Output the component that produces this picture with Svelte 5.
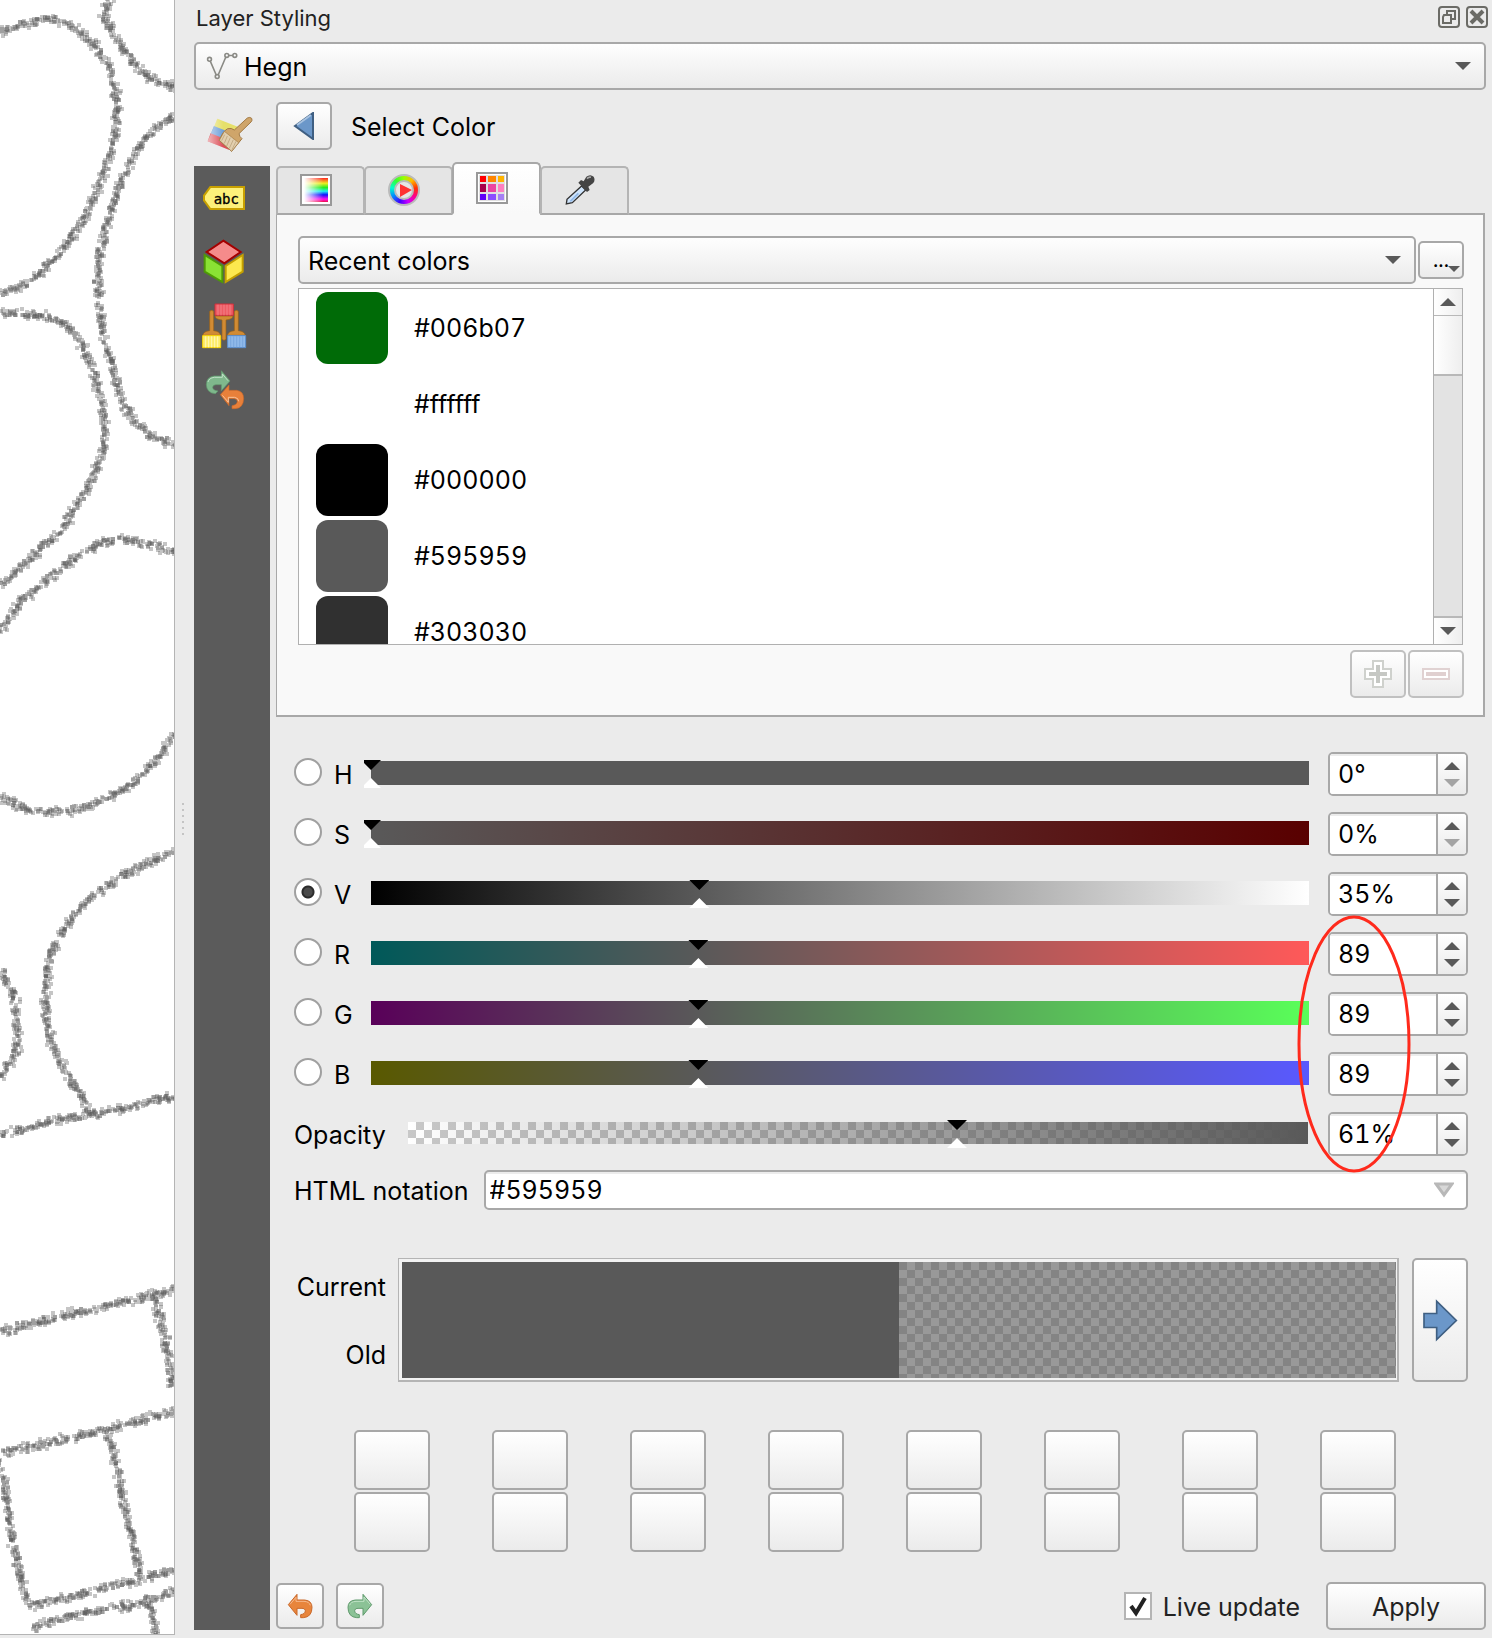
<script>
  const channels = [
    { id: 'H', max: 359, value: 0, text: '0°', track: 'hue', atMin: true },
    { id: 'S', max: 100, value: 0, text: '0%', track: 'saturation', atMin: true },
    { id: 'V', max: 100, value: 35, text: '35%', track: 'value' },
    { id: 'R', max: 255, value: 89, text: '89', track: 'red' },
    { id: 'G', max: 255, value: 89, text: '89', track: 'green' },
    { id: 'B', max: 255, value: 89, text: '89', track: 'blue' }
  ];
  let mode = $state('V');
  let live = $state(true);
  const recent = ['#006b07', '#ffffff', '#000000', '#595959', '#303030'];
  const slots = Array.from({ length: 16 }, (_, i) => i + 1);

  // Hedge lines of the map, drawn as a scatter of small translucent squares.
  const hedges = [
    [[0,32],[20,25],[47,18],[67,24],[88,38],[100,52],[112,75],[117,102],[115,130],[110,155],[98,190],[80,225],[60,252],[40,274],[20,287],[0,293]],
    [[112,-4],[103,18],[113,35],[125,50],[138,70],[150,78],[162,84],[176,87]],
    [[176,115],[160,125],[145,140],[130,162],[118,190],[107,225],[100,255],[98,288],[102,325],[112,365],[120,397],[135,422],[153,437],[176,445]],
    [[0,314],[15,313],[35,315],[53,319],[68,325],[82,345],[93,370],[100,392],[105,425],[103,452],[93,479],[78,503],[62,530],[40,550],[17,570],[0,586]],
    [[0,632],[20,603],[40,585],[73,559],[103,542],[120,540],[147,543],[176,552]],
    [[0,797],[20,807],[43,812],[73,810],[97,803],[123,791],[140,777],[160,756],[175,734]],
    [[176,852],[153,861],[130,871],[103,889],[80,908],[62,933],[48,959],[46,988],[46,1017],[51,1042],[63,1066],[80,1093],[92,1116]],
    [[0,1135],[50,1122],[90,1115],[133,1106],[176,1096]],
    [[0,970],[12,991],[18,1022],[17,1051],[0,1078]],
    [[0,1331],[20,1327],[67,1315],[100,1308],[123,1302],[153,1295],[176,1289]],
    [[153,1293],[160,1317],[167,1347],[173,1387]],
    [[0,1453],[47,1443],[105,1430],[150,1418],[176,1411]],
    [[106,1431],[117,1467],[123,1500],[132,1537],[140,1577]],
    [[0,1460],[7,1500],[13,1543],[28,1605]],
    [[28,1606],[70,1597],[117,1585],[176,1570]],
    [[33,1630],[40,1624],[77,1615],[133,1605],[176,1592]],
    [[149,1602],[157,1636]]
  ];
  let seed = 7;
  function rand() {
    seed = (seed * 1664525 + 1013904223) % 4294967296;
    return seed / 4294967296;
  }
  const layers = ['', '', '', '', '', ''];
  let n = 0;
  for (const line of hedges) {
    for (let i = 0; i < line.length - 1; i++) {
      const [x0, y0] = line[i];
      const [x1, y1] = line[i + 1];
      const len = Math.hypot(x1 - x0, y1 - y0);
      const count = Math.round(len * 1.3);
      for (let k = 0; k < count; k++) {
        const t = rand();
        const off = (rand() + rand() + rand() - 1.5) * 4.4;
        const x = Math.round(x0 + (x1 - x0) * t - ((y1 - y0) / len) * off) - 2;
        const y = Math.round(y0 + (y1 - y0) * t + ((x1 - x0) / len) * off) - 2;
        layers[n++ % layers.length] += `M${x} ${y}h4v4h-4z`;
      }
    }
  }
</script>

{#snippet spin(label, text, low)}
  <div class="spin">
    <input type="text" aria-label={label} value={text} />
    <div class="steps">
      <button aria-label="Increase {label}"><svg viewBox="0 0 16 8"><path d="M0 8 8 0l8 8z" /></svg></button>
      <button aria-label="Decrease {label}" disabled={low}><svg viewBox="0 0 16 8"><path d="M0 0h16L8 8z" /></svg></button>
    </div>
  </div>
{/snippet}

{#snippet undoArrow()}
  <path d="M865 1208 891 1177V1194H914Q936 1196 936 1216 936 1245 910 1247H902V1238Q916 1236 916 1226 915 1218 906 1219H891V1240Z" fill="#e8853c" stroke="#c9682a" stroke-width="3" />
  <path d="M870 1207 888 1186V1198H912Q928 1199 931 1210" fill="none" stroke="#f6b98c" stroke-width="3" />
{/snippet}
{#snippet redoArrow()}
  <path d="M1115 1208 1089 1177V1194H1066Q1044 1196 1044 1216 1044 1245 1070 1247H1078V1238Q1064 1236 1064 1226 1065 1218 1074 1219H1089V1240Z" fill="#8bc296" stroke="#5f9a6c" stroke-width="3" />
  <path d="M1110 1206 1092 1185V1198H1068Q1052 1199 1049 1210" fill="none" stroke="#c0e2c6" stroke-width="3" />
{/snippet}

<div class="window">
  <div class="map">
    <svg viewBox="0 0 174 1634" preserveAspectRatio="xMinYMin slice" aria-label="Map">
      {#each layers as d}<path {d} />{/each}
    </svg>
  </div>
  <div class="splitter"><i></i></div>

  <section class="dock">
    <header class="title">
      <h1>Layer Styling</h1>
      <button aria-label="Float panel">
        <svg viewBox="0 0 22 22" fill="none" stroke="#6b6b66" stroke-width="2"><rect x="1" y="1" width="20" height="20" rx="3" /><path d="M5 11V17H13V9H6ZM9 8V5H17V13H14" /></svg>
      </button>
      <button aria-label="Close panel">
        <svg viewBox="0 0 22 22" fill="none" stroke="#6b6b66" stroke-width="2"><rect x="1" y="1" width="20" height="20" rx="3" /><path d="M5 5 17 17M17 5 5 17" stroke-width="4" /></svg>
      </button>
    </header>

    <div class="combo layer">
      <select aria-label="Layer"><option>Hegn</option></select>
      <svg class="layer-icon" viewBox="76 150 100 96" fill="none" stroke="#8a8a85" stroke-width="5"><path d="M89 182 108 226M114 226 138 170M146 165H160" /><circle cx="87" cy="177" r="6" /><circle cx="111" cy="231" r="6" /><circle cx="141" cy="165" r="6" /><circle cx="166" cy="165" r="6" /></svg>
      <svg class="caret" viewBox="0 0 16 8"><path d="M0 0h16L8 8z" /></svg>
    </div>

    <div class="body">
      <nav class="side">
        <button class="current" aria-label="Symbology">
          <svg viewBox="48 60 144 144">
            <defs><linearGradient id="fade"><stop offset="0" stop-color="#fff" stop-opacity=".6" /><stop offset=".5" stop-color="#fff" stop-opacity="0" /></linearGradient></defs>
            <path d="M82 86 147 112 136 134 72 110Z" fill="#e6e06a" />
            <path d="M72 108 138 134 126 158 62 132Z" fill="#6f9fd8" />
            <path d="M62 130 128 156 118 180 53 154Z" fill="#dc4f58" />
            <path d="M82 86 147 112 118 180 53 154Z" fill="url(#fade)" />
            <path d="M133 120 172 84Q180 80 185 85 188 91 183 96L147 131Q148 140 156 146L125 184 88 151Q98 124 113 116 124 113 133 120Z" fill="#cfa56a" stroke="#a27a45" stroke-width="3" />
            <path d="M103 124 88 151 125 184 146 158Z" fill="#e2cfae" stroke="#a27a45" stroke-width="2" />
            <path d="M104 134 95 152M112 138 103 160M121 143 110 168M130 149 118 175M138 154 126 179" stroke="#b49a72" stroke-width="2" />
          </svg>
        </button>
        <div class="dark">
          <button aria-label="Labels">
            <svg viewBox="30 252 144 144"><path d="M61 291H162V357H61L42 331V317Z" fill="#fdf07a" stroke="#c8a000" stroke-width="6" /><text x="109" y="342" text-anchor="middle">abc</text></svg>
          </button>
          <button aria-label="3D view">
            <svg viewBox="30 444 144 144" stroke-width="6"><path d="M44 495 97 528V576L44 545Z" fill="#8ae234" stroke="#4e9a06" /><path d="M158 495 107 528V576L158 545Z" fill="#fce94f" stroke="#c4a000" /><path d="M100 452 152 486 103 520 50 486Z" fill="#f58b8b" stroke="#a40000" /></svg>
          </button>
          <button aria-label="Masks">
            <svg viewBox="30 636 144 144">
              <g stroke="#9a6015" stroke-width="2">
                <path d="M59 664Q65 658 71 664V722Q90 724 92 736H38Q40 724 59 722Z" fill="#d18b34" />
                <path d="M133 664Q139 658 145 664V722Q164 724 166 736H112Q114 724 133 722Z" fill="#d18b34" />
                <path d="M75 678H129Q128 688 108 690V748Q102 754 96 748V690Q76 688 75 678Z" fill="#d18b34" />
              </g>
              <path d="M75 642H130V676H75Z" fill="#ee5c64" stroke="#cf2f3a" stroke-width="3" />
              <path d="M38 737H92V773H38Z" fill="#fdec6a" stroke="#fdd800" stroke-width="3" />
              <path d="M113 737H167V773H113Z" fill="#8fb9ea" stroke="#5a8fd0" stroke-width="3" />
              <path d="M84 644V676M93 644V676M102 644V676M111 644V676M120 644V676" stroke="#f7949a" stroke-width="2" />
              <path d="M47 739V772M56 739V772M65 739V772M74 739V772M83 739V772" stroke="#fff8b8" stroke-width="3" />
              <path d="M122 739V772M131 739V772M140 739V772M149 739V772M158 739V772" stroke="#6f9fd8" stroke-width="2" />
            </svg>
          </button>
          <button aria-label="History">
            <svg viewBox="30 828 144 144">
              <path d="M120 873 94 842V858H72Q49 861 49 884 50 909 76 911L84 903Q69 902 68 892 69 884 78 884H94V902Z" fill="#7fb88c" stroke="#5f9a6c" stroke-width="2" />
              <path d="M114 872 97 852V862H73Q57 864 54 876" fill="none" stroke="#bfe0c6" stroke-width="3" />
              <path d="M91 914 117 885V901H140Q161 904 161 926 160 954 136 956H126V947Q141 945 142 934 141 926 132 926H117V947Z" fill="#e8803a" stroke="#c9682a" stroke-width="2" />
              <path d="M97 916 115 937V922H134Q146 924 146 934" fill="none" stroke="#f9c39b" stroke-width="3" />
            </svg>
          </button>
        </div>
      </nav>

      <main>
        <div class="head">
          <button class="push back" aria-label="Go back"><svg viewBox="0 0 28 28"><path d="M5 14 23 1V27Z" fill="#6b97c9" stroke="#3f5f82" stroke-width="2" /><path d="M7 13 21 3" stroke="#a9c4e2" stroke-width="2" /></svg></button>
          <h2>Select Color</h2>
        </div>

        <div class="tabs" role="tablist">
          <button role="tab" aria-selected="false" aria-label="Color ramp">
            <svg viewBox="0 0 32 32">
              <defs>
                <linearGradient id="ramp" x2="0" y2="1"><stop offset="0" stop-color="#f22" /><stop offset=".22" stop-color="#ee2" /><stop offset=".4" stop-color="#2e2" /><stop offset=".55" stop-color="#2ee" /><stop offset=".7" stop-color="#11f" /><stop offset=".88" stop-color="#f1e" /><stop offset="1" stop-color="#e14" /></linearGradient>
                <linearGradient id="wash"><stop offset="0" stop-color="#fff" /><stop offset=".8" stop-color="#fff" stop-opacity="0" /></linearGradient>
              </defs>
              <rect x="1" y="1" width="30" height="30" fill="#fff" stroke="#999" stroke-width="2" /><rect x="4" y="4" width="24" height="24" fill="url(#ramp)" /><rect x="4" y="4" width="24" height="24" fill="url(#wash)" />
            </svg>
          </button>
          <button role="tab" aria-selected="false" aria-label="Color wheel">
            <span class="wheel"><svg viewBox="0 0 20 20"><circle cx="10" cy="10" r="9" fill="#e6e6e6" stroke="#bbb" stroke-width="2" /><path d="M6 4 18 10 6 17Z" fill="#f33" /></svg></span>
          </button>
          <button role="tab" aria-selected="true" aria-label="Color swatches">
            <svg viewBox="0 0 32 32"><rect x="1" y="1" width="30" height="30" fill="#fff" stroke="#999" stroke-width="2" /><rect x="3" y="3" width="26" height="26" fill="#e0e0e0" />
              <path d="M4 4h6v6H4z" fill="#f00" /><path d="M12 4h8v6h-8z" fill="#ff8500" /><path d="M22 4h6v6h-6z" fill="#ffb400" />
              <path d="M4 12h6v8H4z" fill="#a8004a" /><path d="M12 12h8v8h-8z" fill="#ec44a0" /><path d="M22 12h6v8h-6z" fill="#ff7fc0" />
              <path d="M4 22h6v6H4z" fill="#6000f8" /><path d="M12 22h8v6h-8z" fill="#8c4dff" /><path d="M22 22h6v6h-6z" fill="#a680f5" /></svg>
          </button>
          <button role="tab" aria-selected="false" aria-label="Color picker">
            <svg viewBox="1153 522 96 96"><path d="M1206 558 1218 570 1178 608 1160 612 1162 598Z" fill="#cfe4fb" stroke="#333" stroke-width="4" /><path d="M1196 580 1172 604" stroke="#8fb8e8" stroke-width="5" /><path d="M1196 548 1204 540 1212 544 1220 530Q1232 521 1242 530 1248 541 1240 550L1226 560 1230 570 1222 576Z" fill="#444" /><path d="M1222 536Q1228 530 1234 532" stroke="#aaa" stroke-width="5" fill="none" /></svg>
          </button>
        </div>

        <div class="page">
          <div class="scheme">
            <div class="combo">
              <select aria-label="Color scheme"><option>Recent colors</option></select>
              <svg class="caret" viewBox="0 0 16 8"><path d="M0 0h16L8 8z" /></svg>
            </div>
            <button class="push more" aria-label="Scheme options"><span>...</span><svg viewBox="0 0 12 6"><path d="M0 0h12L6 6z" /></svg></button>
          </div>
          <div class="list">
            <ul>
              {#each recent as c}
                <li><i style:background={c}></i><span>{c}</span></li>
              {/each}
            </ul>
            <div class="scroll">
              <button aria-label="Scroll up"><svg viewBox="0 0 16 8"><path d="M0 8 8 0l8 8z" /></svg></button>
              <div class="groove"><i></i></div>
              <button aria-label="Scroll down"><svg viewBox="0 0 16 8"><path d="M0 0h16L8 8z" /></svg></button>
            </div>
          </div>
          <div class="edit">
            <button class="push" disabled aria-label="Add color"><svg viewBox="0 0 28 28"><path d="M9 1h10v8h8v10h-8v8H9v-8H1V9h8z" fill="#fff" stroke="#cfd1cd" stroke-width="2" /><path d="M14 5v18M5 14h18" stroke="#c6c8c4" stroke-width="4" /></svg></button>
            <button class="push" disabled aria-label="Remove color"><svg viewBox="0 0 28 28"><path d="M1 9h26v10H1z" fill="#fff" stroke="#e0d2d2" stroke-width="2" /><path d="M4 14h20" stroke="#e0d0d0" stroke-width="4" /></svg></button>
          </div>
        </div>

        <div class="editor">
          <div class="channels">
            {#each channels as ch}
              <div class="row">
                <label class="channel"><input type="radio" name="channel" value={ch.id} bind:group={mode} /><span>{ch.id}</span></label>
                <div class="slider {ch.track}">
                  <input type="range" min="0" max={ch.max} value={ch.value} aria-label="{ch.id} level" />
                </div>
                {@render spin(ch.id, ch.text, ch.atMin)}
              </div>
            {/each}
            <div class="row opacity">
              <label for="opacity">Opacity</label>
              <div class="slider alpha"><input id="opacity" type="range" min="0" max="100" value="61" /></div>
              {@render spin('Opacity', '61%', false)}
            </div>
            <svg class="mark" viewBox="0 0 114 258" aria-hidden="true"><ellipse cx="57" cy="129" rx="55" ry="127" /></svg>
          </div>

          <div class="html">
            <label for="html">HTML notation</label>
            <div class="field">
              <input id="html" type="text" value="#595959" />
              <button aria-label="Color formats"><svg viewBox="0 0 20 16"><path d="M2 2H18L10 13Z" fill="#d8d8d8" stroke="#b8b8b8" stroke-width="3" /></svg></button>
            </div>
          </div>

          <div class="preview">
            <div class="names"><span>Current</span><span>Old</span></div>
            <div class="frame"><div class="solid"></div><div class="blend"></div></div>
            <button class="push" aria-label="Add to swatches"><svg viewBox="516 206 108 128"><path d="M522 249H560V212L619 270 560 327V291H522Z" fill="#6b97c9" stroke="#3f5f82" stroke-width="5" /></svg></button>
          </div>

          <div class="slots">
            {#each slots as s}<button class="push" aria-label="Color slot {s}"></button>{/each}
          </div>
        </div>

        <footer>
          <button class="push tool" aria-label="Undo"><svg viewBox="858 1170 84 84">{@render undoArrow()}</svg></button>
          <button class="push tool" aria-label="Redo"><svg viewBox="1038 1170 84 84">{@render redoArrow()}</svg></button>
          <label class="live"><input type="checkbox" bind:checked={live} /><span class="box"><svg viewBox="0 0 24 24"><path d="M5 12 10 19 19 4" fill="none" stroke="#222" stroke-width="4" /></svg></span><span>Live update</span></label>
          <button class="push apply">Apply</button>
        </footer>
      </main>
    </div>
  </section>
</div>

<style>
  :global(body) { background: #ebebeb; }
  * { box-sizing: border-box; }
  svg { display: block; }
  button, input, select { font: inherit; color: inherit; margin: 0; }
  button { padding: 0; border: 0; background: none; }
  h1, h2, ul { margin: 0; padding: 0; font-weight: 400; }

  .window {
    display: flex;
    min-height: 100vh;
    color: #000;
    font: 25px/32px Inter, "Liberation Sans", sans-serif;
  }
  .map {
    position: relative;
    flex: 0 0 175px;
    margin-bottom: 3px;
    background: #fff;
    border: solid #b4b4b4;
    border-width: 0 1px 1px 0;
    overflow: hidden;
  }
  .map svg { position: absolute; inset: 0; width: 100%; height: 100%; }
  .map path { fill: #555; fill-opacity: .34; }
  .splitter { flex: 0 0 19px; display: flex; align-items: center; padding-left: 7px; }
  .splitter i { width: 2px; height: 32px; background: repeating-linear-gradient(#c4c4c4 0 2px, transparent 2px 6px); }

  .dock { flex: 1; min-width: 0; display: flex; flex-direction: column; padding: 0 6px 8px 0; }
  .title { display: flex; gap: 6px; height: 42px; padding-top: 6px; margin-right: -2px; }
  .title h1 { flex: 1; padding-left: 2px; font-size: 22px; line-height: 24px; color: #222; }
  .title button, .title svg { width: 22px; height: 22px; }

  .combo { position: relative; flex: 1; height: 48px; }
  .combo.layer { flex: none; }
  .combo select {
    appearance: none;
    width: 100%;
    height: 100%;
    padding: 2px 48px 0 8px;
    border: 2px solid #a8a8a8;
    border-radius: 5px;
    background: linear-gradient(#fefefe, #ebebeb);
  }
  .combo.layer select { padding-left: 48px; }
  .layer-icon { position: absolute; left: 12px; top: 8px; width: 32px; height: 32px; }
  .caret { position: absolute; right: 15px; top: 20px; width: 16px; height: 8px; fill: #595959; pointer-events: none; }

  .body { flex: 1; display: flex; gap: 6px; margin-top: 12px; }
  .side { flex: 0 0 76px; display: flex; flex-direction: column; }
  .side button { display: flex; align-items: center; height: 64px; width: 100%; padding-left: 6px; }
  .side .current { padding-left: 12px; }
  .side svg { width: 48px; height: 48px; }
  .side text { font: 42px "DejaVu Sans Mono", monospace; stroke: #000; stroke-width: 1px; }
  .dark { flex: 1; background: #5b5b5b; }

  main { flex: 1; min-width: 0; display: flex; flex-direction: column; }
  .push {
    display: flex;
    align-items: center;
    justify-content: center;
    border: 2px solid #a8a8a8;
    border-radius: 5px;
    background: linear-gradient(#fff, #ebebeb);
  }
  .push:disabled { border-color: #c0c0c0; }
  .push svg { width: 28px; height: 28px; }
  .head { display: flex; align-items: center; gap: 19px; height: 48px; }
  .back { width: 56px; height: 48px; }
  .head h2 { padding-top: 2px; font-size: 25px; }

  .tabs { display: flex; align-items: flex-end; height: 53px; margin: 12px 0 -2px; position: relative; }
  .tabs button {
    width: 89px;
    height: 49px;
    margin-right: -1px;
    padding: 6px 9px 0 0;
    display: flex;
    justify-content: center;
    border: 2px solid #b4b4b4;
    border-bottom-color: #a8a8a8;
    border-radius: 5px 5px 0 0;
    background: #e5e5e5;
  }
  .tabs button[aria-selected='true'] { height: 53px; padding-top: 8px; background: linear-gradient(#fff, #f9f9f9); border-color: #a8a8a8; border-bottom-color: #f9f9f9; }
  .tabs svg { width: 32px; height: 32px; }
  .wheel { display: flex; align-items: center; justify-content: center; width: 32px; height: 32px; border: 2px solid #bbb; border-radius: 50%; background: conic-gradient(#9f0, #fb0, #f30, #f08, #c0f, #40f, #08f, #0fc, #3f3, #9f0); }
  .wheel svg { width: 20px; height: 20px; }

  .page { margin-right: 1px; padding: 21px 19px 17px 21px; border: 2px solid #a8a8a8; border-left-width: 1px; background: #f9f9f9; }
  .scheme { display: flex; align-items: center; gap: 2px; }
  .more { position: relative; width: 46px; height: 38px; }
  .more span { padding-top: 2px; font-size: 16px; font-weight: 700; line-height: 16px; }
  .more svg { position: absolute; right: 2px; bottom: 5px; width: 12px; height: 6px; fill: #595959; }
  .list { display: flex; height: 357px; margin-top: 4px; margin-right: 1px; border: 1px solid #b0b0b0; background: #fff; overflow: hidden; }
  .list ul { flex: 1; list-style: none; padding: 1px 0 0 17px; }
  .list li { display: flex; align-items: center; gap: 26px; height: 76px; font-variant-numeric: tabular-nums; }
  .list li i { width: 72px; height: 72px; border-radius: 12px; }
  .scroll { width: 29px; display: flex; flex-direction: column; border-left: 1px solid #b0b0b0; }
  .scroll button { flex: 0 0 26px; display: flex; align-items: center; justify-content: center; background: linear-gradient(90deg, #fff, #eee); }
  .scroll svg { width: 16px; height: 8px; fill: #595959; }
  .groove { flex: 1; border: solid #b8b8b8; border-width: 1px 0 2px; background: #e3e3e3; }
  .groove i { display: block; height: 60px; border-bottom: 2px solid #b8b8b8; background: linear-gradient(90deg, #fff, #eee); }
  .edit { display: flex; justify-content: flex-end; gap: 2px; margin-top: 5px; }
  .edit .push { width: 56px; height: 48px; }

  .editor { padding: 35px 18px 0 18px; }
  .channels { position: relative; display: grid; gap: 16px; }
  .row { display: grid; grid-template-columns: 77px 1fr 140px; align-items: center; }
  .row.opacity { grid-template-columns: 114px 1fr 140px; }
  .row.opacity label, .html label { padding-top: 2px; }
  .channel { display: flex; align-items: center; gap: 12px; }
  .channel span { padding-top: 1px; }
  .channel input { appearance: none; width: 28px; height: 28px; margin-top: -4px; border: 2px solid #a0a0a0; border-radius: 50%; background: #fff; }
  .channel input:checked { background: radial-gradient(circle, #4a4a4a 0 4px, #2b2b2b 5px 6px, #fff 7px); }
  .slider { position: relative; height: 24px; margin-right: 19px; margin-top: -2px; clip-path: inset(-2px -10px -4px -7px); }
  .hue { background: #595959; }
  .saturation { background: linear-gradient(90deg, #595959, #590000); }
  .value { background: linear-gradient(90deg, #000, #fff); }
  .red { background: linear-gradient(90deg, #005959, #ff5959); }
  .green { background: linear-gradient(90deg, #590059, #59ff59); }
  .blue { background: linear-gradient(90deg, #595900, #5959ff); }
  .alpha { height: 22px; margin-right: 20px; background: linear-gradient(90deg, #59595900, #595959), repeating-conic-gradient(#c8c8c8 0 25%, #fff 0 50%) 0 0 / 16px 16px; }
  .slider input { appearance: none; position: absolute; left: -10px; top: -1px; width: calc(100% + 20px); height: 28px; background: none; }
  .slider.alpha input { top: -2px; }
  .slider input::-webkit-slider-thumb {
    appearance: none;
    width: 20px;
    height: 28px;
    background: linear-gradient(#000 50%, #fff 50%);
    clip-path: polygon(0 0, 100% 0, 50% 10px, 50% 18px, 100% 100%, 0 100%, 50% 18px, 50% 10px);
  }
  .spin { display: flex; height: 44px; border: 2px solid #a8a8a8; border-radius: 5px; background: #fff; overflow: hidden; }
  .spin input { flex: 1; min-width: 0; padding: 0 0 0 8px; border: 0; background: linear-gradient(#ececec 2px, #fff 2px); font-variant-numeric: tabular-nums; }
  .steps { width: 30px; display: flex; flex-direction: column; justify-content: center; gap: 9px; border-left: 2px solid #a8a8a8; background: linear-gradient(#fff, #ebebeb); }
  .steps button { display: flex; justify-content: center; }
  .steps svg { width: 16px; height: 8px; fill: #595959; }
  .steps button:disabled svg { fill: #a4a4a4; }
  .mark { position: absolute; right: 57px; top: 163px; width: 114px; height: 258px; pointer-events: none; }
  .mark ellipse { fill: none; stroke: #ff2a1c; stroke-width: 3; }

  .html { display: flex; align-items: center; gap: 15px; margin-top: 14px; }
  .field { flex: 1; display: flex; align-items: center; height: 40px; padding-right: 12px; border: 2px solid #a8a8a8; border-radius: 5px; background: linear-gradient(#ececec 2px, #fff 2px); }
  .field input { flex: 1; min-width: 0; padding: 0 0 0 4px; border: 0; background: none; font-variant-numeric: tabular-nums; }
  .field svg { width: 20px; height: 16px; }

  .preview { display: grid; grid-template-columns: 92px 1fr 56px; column-gap: 12px; height: 124px; margin-top: 48px; }
  .names { display: flex; flex-direction: column; justify-content: space-between; align-items: flex-end; padding: 13px 0 11px; }
  .frame { display: flex; margin-right: 1px; padding: 3px 1px 2px 3px; border: 1px solid #b4b4b4; border-width: 1px 2px 2px 1px; background: #f2f2f2; }
  .solid { flex: 1; background: #595959; }
  .blend { flex: 1; background: repeating-conic-gradient(#999 0 25%, #848484 0 50%) 0 0 / 16px 16px; }
  .preview svg { width: 36px; height: 43px; }

  .slots { display: grid; grid-template-columns: repeat(8, 76px); justify-content: space-between; row-gap: 2px; margin: 48px 72px 0 60px; }
  .slots .push { height: 60px; }

  footer { display: flex; align-items: center; gap: 12px; margin-top: 30px; color: #222; }
  .tool { width: 48px; height: 46px; }
  .live { display: flex; align-items: center; gap: 11px; margin-left: auto; margin-right: 14px; }
  .live input { position: absolute; opacity: 0; width: 28px; height: 28px; margin: 0; }
  .live span:last-child { padding-top: 2px; }
  .box { width: 28px; height: 28px; border: 2px solid #b4b4b4; background: #fff; }
  .box svg { width: 24px; height: 24px; visibility: hidden; }
  .live input:checked + .box svg { visibility: visible; }
  .apply { width: 160px; height: 48px; padding-top: 2px; }
</style>
